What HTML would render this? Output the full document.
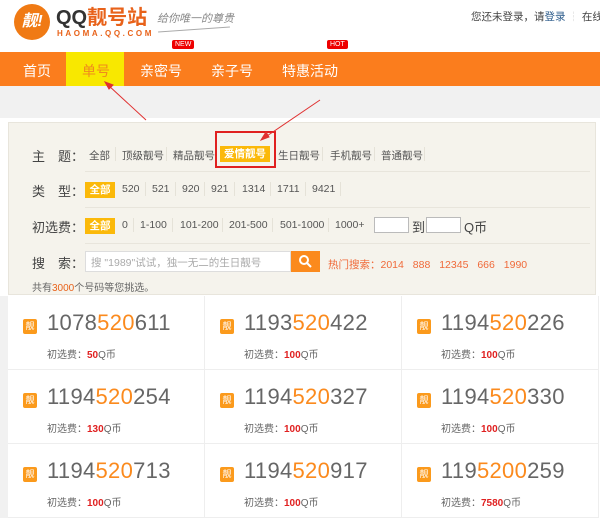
<!DOCTYPE html>
<html><head><meta charset="utf-8"><style>
*{margin:0;padding:0;box-sizing:border-box}
body{width:600px;height:518px;overflow:hidden;background:#fff;font-family:"Liberation Sans","Noto Sans CJK SC",sans-serif;position:relative;color:#555}
.a{position:absolute;white-space:nowrap}
.nav{position:absolute;left:0;top:52px;width:600px;height:34px;background:#fb7d1d}
.nav span{position:absolute;top:9px;color:#fff;font-size:14px}
.panel{position:absolute;left:8px;top:122px;width:588px;height:173px;background:#f5f3ec;border:1px solid #e8e5dc}
.lbl{position:absolute;font-size:13px;color:#444;white-space:nowrap}
.i{position:absolute;font-size:10.5px;color:#555;white-space:nowrap}
.s{position:absolute;width:1px;height:14px;background:#e5e2d8}
.sel{position:absolute;background:#fbb90a;color:#fff;font-size:10.5px;font-weight:bold;text-align:center;height:16px;line-height:16px}
.line{position:absolute;left:85px;width:505px;height:1px;background:#e8e5dc}
.card{position:absolute;width:197px;height:74px;border-right:1px solid #eee;border-bottom:1px solid #eee;background:#fff}
.ic{position:absolute;left:15px;top:23px;width:14px;height:15px;background:#fb9a1c;color:#fff;font-size:9px;text-align:center;line-height:15px;border-radius:2px}
.num{position:absolute;left:39px;top:14px;font-size:22px;color:#666;letter-spacing:.3px}
.num b{font-weight:normal;color:#fb8a1d}
.fee{position:absolute;left:39px;top:50px;font-size:10px;color:#666}
.fee b{color:#e02020}
</style></head><body>
<div class="a" style="left:14px;top:4px;width:36px;height:36px;border-radius:50%;background:#f07a14;color:#fff;font-size:16px;font-weight:bold;line-height:36px;text-align:center;font-style:italic">靓!</div>
<div class="a" style="left:56px;top:6px;font-size:20px;line-height:24px;font-weight:bold;color:#333">QQ<span style="color:#e8621a">靓号站</span></div>
<div class="a" style="left:57px;top:29px;font-size:8px;letter-spacing:2.6px;color:#e8621a;font-weight:bold">HAOMA.QQ.COM</div>
<div class="a" style="left:157px;top:10px;font-size:11px;color:#888;font-style:italic">给你唯一的尊贵</div>
<div class="a" style="left:158px;top:29px;width:72px;height:1px;background:#aaa;transform:rotate(-4deg)"></div>
<div class="a" style="left:471px;top:9px;font-size:10.5px;color:#444">您还未登录，请<span style="color:#2a5a8a">登录</span> <span style="color:#ccc">┆</span> 在线客</div>
<div class="nav">
<div style="position:absolute;left:66px;top:0;width:58px;height:34px;background:#f8e800"></div>
<span style="left:23px">首页</span><span style="left:82px;color:#f08a1d">单号</span><span style="left:140px">亲密号</span><span style="left:211px">亲子号</span><span style="left:282px">特惠活动</span>
</div>
<div class="a" style="left:172px;top:40px;background:#e00;color:#fff;font-size:7px;padding:1px 3px;border-radius:2px">NEW</div>
<div class="a" style="left:327px;top:40px;background:#e00;color:#fff;font-size:7px;padding:1px 3px;border-radius:2px">HOT</div>
<div class="a" style="left:0;top:86px;width:600px;height:32px;background:#f1f1f1"></div>
<div class="panel"></div>

<div class="lbl" style="left:32px;top:146px">主　题：</div>
<div class="i" style="left:89px;top:148px">全部</div><div class="s" style="left:115px;top:147px"></div>
<div class="i" style="left:122px;top:148px">顶级靓号</div><div class="s" style="left:166px;top:147px"></div>
<div class="i" style="left:173px;top:148px">精品靓号</div>
<div class="sel" style="left:220px;top:146px;width:50px">爱情靓号</div>
<div class="i" style="left:278px;top:148px">生日靓号</div><div class="s" style="left:322px;top:147px"></div>
<div class="i" style="left:330px;top:148px">手机靓号</div><div class="s" style="left:374px;top:147px"></div>
<div class="i" style="left:381px;top:148px">普通靓号</div><div class="s" style="left:424px;top:147px"></div>
<div class="line" style="top:171px"></div>

<div class="lbl" style="left:32px;top:181px">类　型：</div>
<div class="sel" style="left:85px;top:182px;width:30px">全部</div>
<div class="i" style="left:122px;top:183px">520</div><div class="s" style="left:145px;top:182px"></div>
<div class="i" style="left:152px;top:183px">521</div><div class="s" style="left:175px;top:182px"></div>
<div class="i" style="left:182px;top:183px">920</div><div class="s" style="left:204px;top:182px"></div>
<div class="i" style="left:211px;top:183px">921</div><div class="s" style="left:234px;top:182px"></div>
<div class="i" style="left:242px;top:183px">1314</div><div class="s" style="left:270px;top:182px"></div>
<div class="i" style="left:277px;top:183px">1711</div><div class="s" style="left:305px;top:182px"></div>
<div class="i" style="left:312px;top:183px">9421</div><div class="s" style="left:340px;top:182px"></div>
<div class="line" style="top:207px"></div>

<div class="lbl" style="left:32px;top:217px">初选费：</div>
<div class="sel" style="left:85px;top:218px;width:30px">全部</div>
<div class="i" style="left:122px;top:219px">0</div><div class="s" style="left:133px;top:218px"></div>
<div class="i" style="left:140px;top:219px">1-100</div><div class="s" style="left:172px;top:218px"></div>
<div class="i" style="left:180px;top:219px">101-200</div><div class="s" style="left:222px;top:218px"></div>
<div class="i" style="left:229px;top:219px">201-500</div><div class="s" style="left:272px;top:218px"></div>
<div class="i" style="left:280px;top:219px">501-1000</div><div class="s" style="left:328px;top:218px"></div>
<div class="i" style="left:335px;top:219px">1000+</div>
<div class="a" style="left:374px;top:217px;width:35px;height:16px;background:#fff;border:1px solid #bbb"></div>
<div class="lbl" style="left:412px;top:217px">到</div>
<div class="a" style="left:426px;top:217px;width:35px;height:16px;background:#fff;border:1px solid #bbb"></div>
<div class="lbl" style="left:464px;top:217px">Q币</div>
<div class="line" style="top:243px"></div>

<div class="lbl" style="left:32px;top:253px">搜　索：</div>
<div class="a" style="left:85px;top:251px;width:206px;height:21px;background:#fff;border:1px solid #ddd;font-size:10.5px;color:#aaa;padding:3px 5px">搜 "1989"试试，独一无二的生日靓号</div>
<div class="a" style="left:291px;top:251px;width:29px;height:21px;background:#fb8a1d"><svg width="29" height="21"><circle cx="13" cy="9" r="4" stroke="#fff" stroke-width="2" fill="none"/><path d="M16 12l4 4" stroke="#fff" stroke-width="2"/></svg></div>
<div class="a" style="left:328px;top:257px;font-size:10.5px;color:#f06a3a;word-spacing:6px">热门搜索：2014 888 12345 666 1990</div>
<div class="a" style="left:32px;top:279px;font-size:10px;color:#666">共有<span style="color:#e8621a">3000</span>个号码等您挑选。</div>

<div class="card" style="left:8px;top:296px"><div class="ic">靓</div><div class="num">1078<b>520</b>611</div><div class="fee">初选费：<b>50</b>Q币</div></div>
<div class="card" style="left:205px;top:296px"><div class="ic">靓</div><div class="num">1193<b>520</b>422</div><div class="fee">初选费：<b>100</b>Q币</div></div>
<div class="card" style="left:402px;top:296px"><div class="ic">靓</div><div class="num">1194<b>520</b>226</div><div class="fee">初选费：<b>100</b>Q币</div></div>
<div class="card" style="left:8px;top:370px"><div class="ic">靓</div><div class="num">1194<b>520</b>254</div><div class="fee">初选费：<b>130</b>Q币</div></div>
<div class="card" style="left:205px;top:370px"><div class="ic">靓</div><div class="num">1194<b>520</b>327</div><div class="fee">初选费：<b>100</b>Q币</div></div>
<div class="card" style="left:402px;top:370px"><div class="ic">靓</div><div class="num">1194<b>520</b>330</div><div class="fee">初选费：<b>100</b>Q币</div></div>
<div class="card" style="left:8px;top:444px"><div class="ic">靓</div><div class="num">1194<b>520</b>713</div><div class="fee">初选费：<b>100</b>Q币</div></div>
<div class="card" style="left:205px;top:444px"><div class="ic">靓</div><div class="num">1194<b>520</b>917</div><div class="fee">初选费：<b>100</b>Q币</div></div>
<div class="card" style="left:402px;top:444px"><div class="ic">靓</div><div class="num">119<b>5200</b>259</div><div class="fee">初选费：<b>7580</b>Q币</div></div>
<div class="a" style="left:0;top:296px;width:8px;height:222px;background:#f1f1f1"></div>

<div class="a" style="left:215px;top:131px;width:61px;height:37px;border:2px solid #e02020"></div>
<svg class="a" style="left:0;top:0" width="600" height="518"><g stroke="#e03030" stroke-width="1" fill="#e03030">
<line x1="146" y1="120" x2="108" y2="85"/><path d="M105 82l8 3-4 4z"/>
<line x1="320" y1="100" x2="264" y2="138"/><path d="M261 140l5-8 3 5z"/></g></svg>
</body></html>
